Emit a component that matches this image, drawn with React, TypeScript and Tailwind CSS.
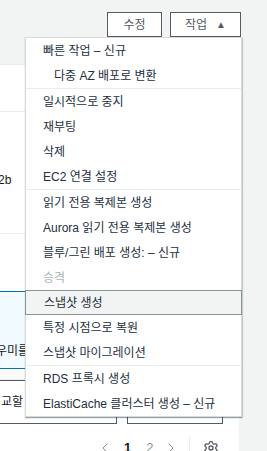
import { Settings, ChevronLeft, ChevronRight } from "lucide-react";

type Item = { label: string; sub?: boolean; disabled?: boolean; active?: boolean };

const groups: Item[][] = [
  [{ label: "빠른 작업 – 신규" }, { label: "다중 AZ 배포로 변환", sub: true }],
  [{ label: "일시적으로 중지" }, { label: "재부팅" }, { label: "삭제" }, { label: "EC2 연결 설정" }],
  [
    { label: "읽기 전용 복제본 생성" },
    { label: "Aurora 읽기 전용 복제본 생성" },
    { label: "블루/그린 배포 생성: – 신규" },
    { label: "승격", disabled: true },
    { label: "스냅샷 생성", active: true },
    { label: "특정 시점으로 복원" },
    { label: "스냅샷 마이그레이션" },
  ],
  [{ label: "RDS 프록시 생성" }, { label: "ElastiCache 클러스터 생성 – 신규" }],
];

function MenuItem({ item }: { item: Item }) {
  return (
    <div
      className={`flex h-[25px] items-center whitespace-nowrap pt-[1px] text-[12px] leading-none ${
        item.sub ? "pl-[28px]" : "pl-[17px]"
      } ${item.disabled ? "text-[#aab7b8]" : "text-[#232f3e]"} ${
        item.active ? "-mx-px border border-[#879596] bg-[#f2f3f3] pl-[18px]" : ""
      }`}
    >
      {item.label}
    </div>
  );
}

export default function App() {
  return (
    <div
      className="relative h-[451px] w-[267px] overflow-hidden bg-[#f2f3f3]"
      style={{ fontFamily: '"Liberation Sans", "Noto Sans CJK KR", sans-serif' }}
    >
      {/* header buttons */}
      <div className="flex h-[64px] items-start justify-end gap-2 pr-[26px] pt-3">
        <button className="h-[25px] w-[55px] border border-[#545b64] bg-white text-[12px] text-[#545b64]">
          수정
        </button>
        <button className="flex h-[25px] w-[71px] items-center justify-center gap-[9px] border border-[#545b64] bg-white text-[12px] text-[#545b64]">
          작업
          <span className="text-[10px] leading-none">▲</span>
        </button>
      </div>

      {/* panel behind the menu */}
      <div className="w-[239px] border-t border-[#eaeded] bg-white text-[12px] text-[#16191f]">
        <div className="h-[47px] border-b border-[#eaeded]" />
        <div className="h-[122px] border-b border-[#eaeded] pt-[59px]">
          <span className="-ml-[2px]">2b</span>
        </div>
        <div className="h-[57px]" />
        <div className="h-[78px] border-y border-[#0073bb] bg-[#f1faff] pt-[50px]">
          <span className="-ml-[4px] whitespace-nowrap">우미를</span>
        </div>
        <div className="h-[10px] bg-[#fafafa]" />
        <div className="flex h-[45px] items-end gap-[10px] border-t border-[#eaeded]">
          <div className="-ml-[14px] flex h-[44px] w-[131px] items-center whitespace-nowrap border border-[#545b64] pl-[3px]">
            비교할
          </div>
          <div className="h-[44px] w-[96px] border border-[#545b64]" />
        </div>
        <div className="flex h-[28px] items-end pl-[97px] text-[13px] text-[#879596]">
          <div className="-mb-[8px] flex items-center">
            <ChevronLeft size={16} strokeWidth={1.5} />
            <span className="ml-[11px] font-bold text-[#16191f]">1</span>
            <span className="ml-[15px]">2</span>
            <ChevronRight size={16} strokeWidth={1.5} className="ml-[10px]" />
            <span className="ml-[10px] h-[24px] border-l border-[#eaeded]" />
            <Settings size={16} className="ml-[13px] text-[#545b64]" />
          </div>
        </div>
      </div>

      {/* actions dropdown */}
      <div className="absolute left-[25px] top-[37px] w-[217px] border border-[#d5dbdb] bg-white shadow-[0_1px_1px_0_rgba(0,28,36,0.3),1px_1px_1px_0_rgba(0,28,36,0.15)]">
        {groups.map((g, i) => (
          <div key={i} className={i > 0 ? "border-t border-[#eaeded]" : ""}>
            {g.map((item) => (
              <MenuItem key={item.label} item={item} />
            ))}
          </div>
        ))}
      </div>
    </div>
  );
}
